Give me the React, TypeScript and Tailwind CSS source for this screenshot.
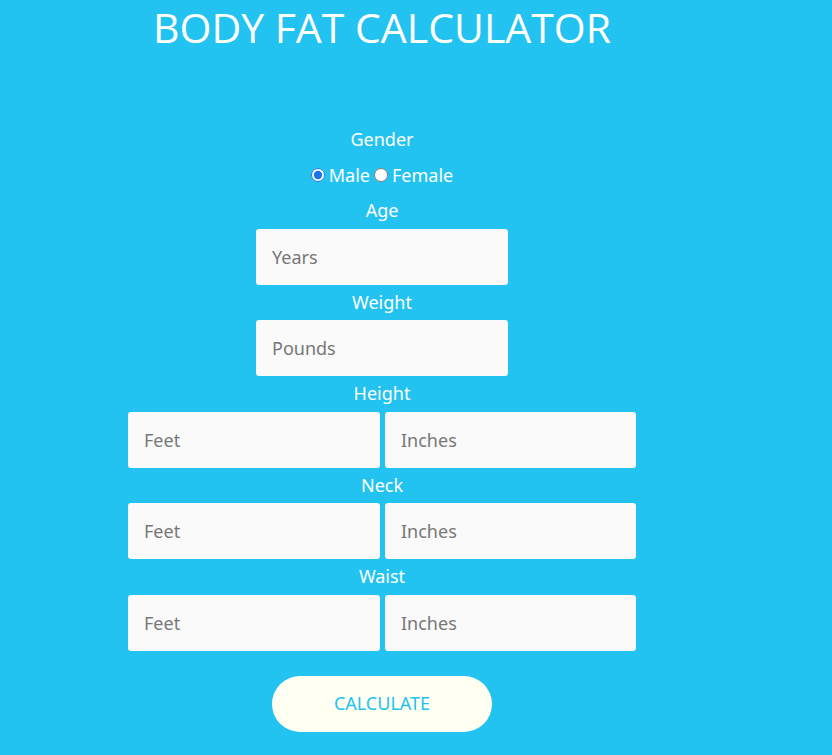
import { useState } from 'react';

const Label = ({ children }: { children: React.ReactNode }) => (
  <div className="h-[35.5px] flex items-center justify-center text-[18px] text-white">{children}</div>
);

const Field = ({ placeholder, wide }: { placeholder: string; wide?: boolean }) => (
  <input
    type="text"
    placeholder={placeholder}
    className={`${wide ? 'w-[251px]' : 'w-[252px]'} h-[56px] bg-[#fafafa] rounded-[3px] pl-4 text-[18px] text-gray-800 placeholder:text-[#777] outline-none`}
  />
);

export default function App() {
  const [gender, setGender] = useState('male');

  return (
    <div className="min-h-[755px] bg-[#22c3f0] font-['Noto_Sans',sans-serif]">
      <div className="w-[764px] flex flex-col items-center">
        <h1 className="text-[41px] leading-[54px] text-white font-['Open_Sans',sans-serif] mb-[68px]">BODY FAT CALCULATOR</h1>

        <Label>Gender</Label>
        <div className="h-[35.5px] flex items-center gap-1 text-[18px] text-white">
          <label className="flex items-center gap-1">
            <input type="radio" name="g" checked={gender === 'male'} onChange={() => setGender('male')} className="w-[14px] h-[14px] accent-[#1a73e8]" />
            Male
          </label>
          <label className="flex items-center gap-1">
            <input type="radio" name="g" checked={gender === 'female'} onChange={() => setGender('female')} className="w-[14px] h-[14px]" />
            Female
          </label>
        </div>

        <Label>Age</Label>
        <Field placeholder="Years" />
        <Label>Weight</Label>
        <Field placeholder="Pounds" />

        <Label>Height</Label>
        <div className="flex gap-[5px]">
          <Field placeholder="Feet" />
          <Field placeholder="Inches" wide />
        </div>
        <Label>Neck</Label>
        <div className="flex gap-[5px]">
          <Field placeholder="Feet" />
          <Field placeholder="Inches" wide />
        </div>
        <Label>Waist</Label>
        <div className="flex gap-[5px]">
          <Field placeholder="Feet" />
          <Field placeholder="Inches" wide />
        </div>

        <button className="mt-[25px] w-[220px] h-[56px] rounded-full bg-[#fffff2] text-[#22c3f0] text-[18px]">CALCULATE</button>
      </div>
    </div>
  );
}
